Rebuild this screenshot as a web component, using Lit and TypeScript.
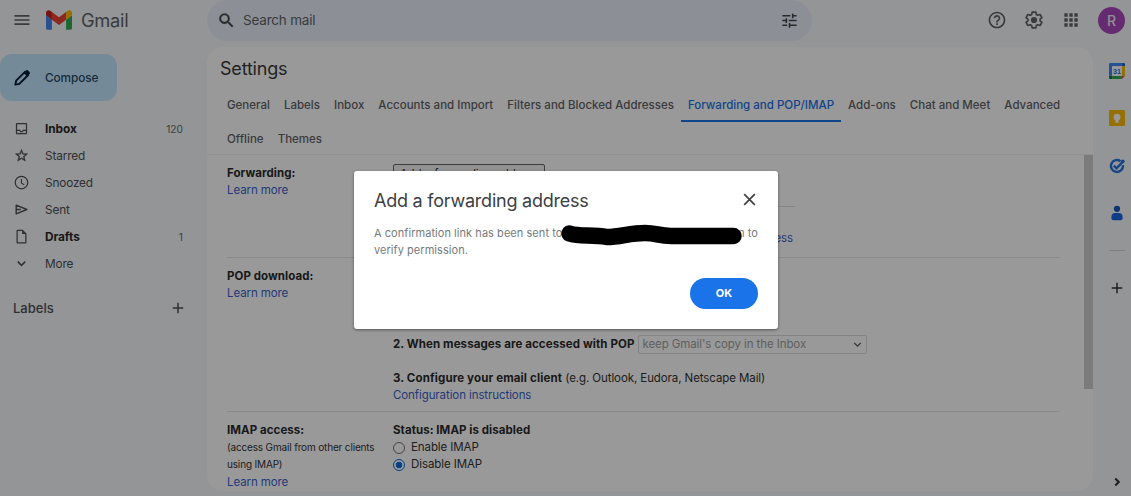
import { html, css, svg, LitElement } from "lit";
import { customElement, property, state } from "lit/decorators.js";
import { classMap } from "lit/directives/class-map.js";

const icons = {
  menu: svg`<path d="M3 18h18v-2H3v2zm0-5h18v-2H3v2zm0-7v2h18V6H3z" />`,
  search: svg`<path d="M15.500 14h-.79l-.28-.27A6.470 6.470 0 0 0 16 9.500 6.500 6.500 0 1 0 9.500 16c1.610 0 3.090-.59 4.230-1.570l.27.28v.79l5 4.990L20.490 19l-4.990-5zm-6 0C7.010 14 5 11.990 5 9.500S7.010 5 9.500 5 14 7.010 14 9.500 11.990 14 9.500 14z" stroke="currentColor" stroke-width=".5" />`,
  tune: svg`<path d="M3 17v2h6v-2H3zM3 5v2h10V5H3zm10 16v-2h8v-2h-8v-2h-2v6h2zM7 9v2H3v2h4v2h2V9H7zm14 4v-2H11v2h10zm-6-4h2V7h4V5h-4V3h-2v6z" />`,
  help: svg`<path d="M11 18h2v-2h-2v2zm1-16C6.480 2 2 6.480 2 12s4.480 10 10 10 10-4.480 10-10S17.520 2 12 2zm0 18c-4.410 0-8-3.590-8-8s3.590-8 8-8 8 3.590 8 8-3.590 8-8 8zm0-14c-2.210 0-4 1.790-4 4h2c0-1.100.9-2 2-2s2 .9 2 2c0 2-3 1.750-3 5h2c0-2.250 3-2.500 3-5 0-2.210-1.790-4-4-4z" />`,
  gear: svg`<path d="M9.800 2.500h4.400l.6 2.900 1.700 1 2.900-1 2.100 3.700-2.200 1.950v1.900l2.200 1.950-2.100 3.700-2.900-1-1.700 1-.6 2.900H9.800l-.6-2.900-1.700-1-2.900 1-2.100-3.700 2.200-1.950v-1.900L2.500 9.100l2.100-3.700 2.900 1 1.700-1z" fill="none" stroke="currentColor" stroke-width="2" stroke-linejoin="round" /><circle cx="12" cy="12" r="3.700" />`,
  apps: svg`<path d="M4 4h4v4H4zM10 4h4v4h-4zM16 4h4v4h-4zM4 10h4v4H4zM10 10h4v4h-4zM16 10h4v4h-4zM4 16h4v4H4zM10 16h4v4h-4zM16 16h4v4h-4z" />`,
  pencil: svg`<path d="M4 20l1-4.800L15.600 4.600l3.800 3.800L8.800 19z" fill="none" stroke="currentColor" stroke-width="2.300" stroke-linejoin="round" /><path d="M14 6l3-3.200q1-.9 2 0l2.200 2.200q.9 1 0 2L18 10z" />`,
  inbox: svg`<path d="M19 3H5c-1.100 0-2 .9-2 2v14c0 1.100.9 2 2 2h14c1.100 0 2-.9 2-2V5c0-1.100-.9-2-2-2zm0 16H5v-3h3.560c.69 1.190 1.970 2 3.450 2s2.750-.81 3.450-2H19v3zm0-5h-4.990c0 1.100-.9 2-2 2s-2-.9-2-2H5V5h14v9z" />`,
  star: svg`<path d="M22 9.240l-7.190-.62L12 2 9.190 8.630 2 9.240l5.460 4.730L5.820 21 12 17.270 18.180 21l-1.630-7.030L22 9.240zM12 15.400l-3.760 2.270 1-4.280-3.320-2.880 4.380-.38L12 6.100l1.710 4.040 4.380.38-3.320 2.880 1 4.280L12 15.400z" stroke="currentColor" stroke-width=".6" />`,
  clock: svg`<circle cx="12" cy="12" r="10" fill="none" stroke="currentColor" stroke-width="2" /><path d="M11 6.500h1.800v5.700l4 2.900-1 1.400L11 13z" />`,
  sent: svg`<path d="M3.500 5l17 7-17 7zM4 12h7" fill="none" stroke="currentColor" stroke-width="2.200" stroke-linejoin="round" />`,
  draft: svg`<path d="M14 1H6c-1.100 0-2 .9-2 2v18c0 1.100.9 2 2 2h12c1.100 0 2-.9 2-2V7l-6-6zM6 21V3h7v5h5v13H6z" />`,
  down: svg`<path d="M6 9l6 6 6-6" fill="none" stroke="currentColor" stroke-width="2.300" />`,
  right: svg`<path d="M9 6l6 6-6 6" fill="none" stroke="currentColor" stroke-width="3.500" />`,
  plus: svg`<path d="M19 13h-6v6h-2v-6H5v-2h6V5h2v6h6v2z" />`,
  close: svg`<path d="M4.500 4.500l15 15M19.500 4.500l-15 15" fill="none" stroke="currentColor" stroke-width="2.500" />`,
};

@customElement("mail-icon")
export class MailIcon extends LitElement {
  static styles = css`
    :host {
      display: block;
      flex: none;
      width: 18px;
      height: 18px;
    }
    svg {
      display: block;
      width: 100%;
      height: 100%;
      fill: currentColor;
    }
  `;

  @property({ type: String }) name: keyof typeof icons = "menu";

  render() {
    return html`<svg viewBox="0 0 24 24">${icons[this.name]}</svg>`;
  }
}

@customElement("mail-header")
export class MailHeader extends LitElement {
  static styles = css`
    :host {
      display: grid;
      grid-template-columns: 207px 605px 1fr;
      height: 41px;
      color: #5f6368;
    }
    .brand,
    .search,
    .actions {
      display: flex;
      align-items: center;
      box-sizing: border-box;
      padding-bottom: 1px;
    }
    .brand {
      padding-left: 12px;
    }
    .brand mail-icon {
      width: 20px;
      height: 20px;
    }
    .logo {
      width: 26px;
      height: 20px;
      margin: 0 9px 0 14px;
    }
    .name {
      font-size: 18.3px;
      letter-spacing: -0.3px;
    }
    .search {
      padding-left: 10px;
      padding-right: 13px;
      border-radius: 21px;
      background: #eaf1fb;
      font-size: 13.5px;
    }
    .search span {
      flex: 1;
      margin-left: 7px;
      letter-spacing: -0.2px;
    }
    .search mail-icon {
      color: #444746;
      width: 19px;
      height: 19px;
    }
    .actions {
      justify-content: flex-end;
      padding-right: 6px;
      gap: 17px;
    }
    .actions mail-icon {
      width: 20px;
      height: 20px;
    }
    .avatar {
      width: 27px;
      height: 27px;
      border-radius: 50%;
      background: #ab47bc;
      color: #eee;
      font-size: 14px;
      font-weight: 500;
      line-height: 28px;
      text-align: center;
    }
  `;

  render() {
    return html`
      <div class="brand">
        <mail-icon name="menu"></mail-icon>
        <svg class="logo" viewBox="52 42 88 66">
          <path fill="#4285f4" d="M58 108h14V74L52 59v43c0 3.320 2.690 6 6 6" />
          <path fill="#34a853" d="M120 108h14c3.320 0 6-2.690 6-6V59l-20 15" />
          <path fill="#fbbc04" d="M120 48v26l20-15v-8c0-7.420-8.470-11.650-14.400-7.200" />
          <path fill="#ea4335" d="M72 74V48l24 18 24-18v26L96 92" />
          <path fill="#c5221f" d="M52 51v8l20 15V48l-5.600-4.200c-5.940-4.450-14.400-.22-14.400 7.200" />
        </svg>
        <span class="name">Gmail</span>
      </div>
      <div class="search">
        <mail-icon name="search"></mail-icon>
        <span>Search mail</span>
        <mail-icon name="tune"></mail-icon>
      </div>
      <div class="actions">
        <mail-icon name="help"></mail-icon>
        <mail-icon name="gear"></mail-icon>
        <mail-icon name="apps"></mail-icon>
        <div class="avatar">R</div>
      </div>
    `;
  }
}

@customElement("mail-sidebar")
export class MailSidebar extends LitElement {
  static styles = css`
    :host {
      display: block;
      padding-top: 7px;
      color: #4d5054;
      font-size: 11.8px;
    }
    .compose {
      display: flex;
      align-items: center;
      box-sizing: border-box;
      width: 117px;
      height: 47px;
      padding-left: 12px;
      border-radius: 12px;
      background: #c2e7ff;
      color: #001d35;
      font-weight: 500;
    }
    .compose mail-icon {
      width: 20px;
      height: 20px;
      margin-right: 13px;
    }
    .compose span {
      color: #264a62;
      letter-spacing: -0.1px;
    }
    .folders {
      padding-top: 14px;
    }
    .folder {
      display: flex;
      align-items: center;
      height: 27px;
      padding: 0 24px 0 14px;
    }
    .folder mail-icon {
      width: 15px;
      height: 15px;
      margin-right: 16px;
    }
    .folder span {
      flex: 1;
      letter-spacing: -0.15px;
    }
    .folder small {
      color: #666a6e;
      font-size: 10.2px;
    }
    .folder--unread span {
      color: #2b2b2b;
      font-weight: 700;
      letter-spacing: -0.05px;
    }
    .labels {
      display: flex;
      align-items: center;
      justify-content: space-between;
      height: 20px;
      margin-top: 21px;
      padding: 0 20px 0 13px;
      font-size: 13px;
      font-weight: 500;
    }
    .labels mail-icon {
      width: 18px;
      height: 18px;
    }
  `;

  folders = [
    { icon: "inbox", name: "Inbox", count: "120" },
    { icon: "star", name: "Starred" },
    { icon: "clock", name: "Snoozed" },
    { icon: "sent", name: "Sent" },
    { icon: "draft", name: "Drafts", count: "1" },
    { icon: "down", name: "More" },
  ];

  render() {
    return html`
      <div class="compose">
        <mail-icon name="pencil"></mail-icon><span>Compose</span>
      </div>
      <div class="folders">
        ${this.folders.map(
          (f) => html`
            <div class=${classMap({ folder: true, "folder--unread": !!f.count })}>
              <mail-icon name=${f.icon}></mail-icon>
              <span>${f.name}</span>
              <small>${f.count}</small>
            </div>
          `
        )}
      </div>
      <div class="labels">
        Labels
        <mail-icon name="plus"></mail-icon>
      </div>
    `;
  }
}

@customElement("mail-settings")
export class MailSettings extends LitElement {
  static styles = css`
    :host {
      display: block;
      box-sizing: border-box;
      height: 444px;
      overflow: hidden;
      border-radius: 16px;
      background: #fff;
      color: #333;
      font-size: 11.5px;
      line-height: 17px;
      letter-spacing: -0.09px;
    }
    h1 {
      margin: 0;
      padding: 10px 13px 0;
      color: #3a3a3a;
      font-size: 18px;
      font-weight: 400;
      line-height: 24px;
      letter-spacing: -0.2px;
    }
    b {
      color: #2b2b2b;
      letter-spacing: 0.06px;
    }
    .tabs {
      display: flex;
      flex-wrap: wrap;
      align-content: flex-start;
      box-sizing: border-box;
      height: 74px;
      padding: 8px 13px 0;
      border-bottom: 1px solid #f0f0f0;
    }
    .tab {
      box-sizing: border-box;
      height: 34px;
      padding: 8px 7px 0;
      color: #5f6368;
      font-weight: 500;
      letter-spacing: 0.01px;
      white-space: nowrap;
    }
    .tab--active {
      height: 33px;
      border-bottom: 2px solid #1a73e8;
      color: #1a73e8;
    }
    .body {
      display: flex;
      height: 336px;
    }
    .rows {
      width: 833px;
      margin: 0 24px 0 20px;
    }
    .row {
      display: grid;
      grid-template-columns: 166px 1fr;
      box-sizing: border-box;
      padding-top: 9px;
      border-bottom: 1px solid #e6e6e6;
      white-space: nowrap;
    }
    .row--forwarding {
      height: 103px;
    }
    .row--pop {
      height: 154px;
    }
    .row--imap {
      border: 0;
    }
    .label {
      padding-top: 0.6px;
    }
    .link {
      color: #3a5fc8;
    }
    .note {
      font-size: 10px;
      line-height: 17.7px;
      letter-spacing: -0.16px;
    }
    .add {
      box-sizing: border-box;
      width: 152px;
      height: 20px;
      border: 1px solid #666;
      border-radius: 2px;
      background: #f4f4f4;
      line-height: 19px;
      text-align: center;
    }
    .address {
      box-sizing: border-box;
      width: 402px;
      margin-top: 22px;
      padding: 23px 2px 0 0;
      border-top: 1px solid #ddd;
      text-align: right;
    }
    .modes {
      height: 69px;
    }
    .when {
      display: flex;
      align-items: center;
      gap: 4px;
      height: 17px;
      margin-bottom: 17px;
    }
    .when b {
      letter-spacing: 0.1px;
    }
    .client b {
      letter-spacing: 0.14px;
    }
    .select {
      display: flex;
      align-items: center;
      justify-content: space-between;
      box-sizing: border-box;
      width: 229px;
      height: 19px;
      padding: 0 2px 0 3px;
      border: 1px solid #dcdcdc;
      border-radius: 2px;
      color: #a0a0a0;
    }
    .select mail-icon {
      width: 13px;
      height: 13px;
      color: #555;
    }
    .option {
      display: flex;
      align-items: center;
      gap: 6px;
    }
    .radio {
      box-sizing: border-box;
      width: 12px;
      height: 12px;
      margin-top: 1px;
      border: 1px solid #767676;
      border-radius: 50%;
    }
    .radio--checked {
      border-color: #0b6be0;
      background: radial-gradient(circle, #0b6be0 3px, transparent 3.6px);
    }
    .scrollbar {
      width: 9px;
      height: 234px;
      background: #cecece;
    }
  `;

  @property({ type: String }) active = "Forwarding and POP/IMAP";
  @property({ type: String }) imap = "Disable";

  tabs = [
    "General",
    "Labels",
    "Inbox",
    "Accounts and Import",
    "Filters and Blocked Addresses",
    "Forwarding and POP/IMAP",
    "Add-ons",
    "Chat and Meet",
    "Advanced",
    "Offline",
    "Themes",
  ];

  render() {
    return html`
      <h1>Settings</h1>
      <div class="tabs">
        ${this.tabs.map(
          (tab) => html`
            <div class=${classMap({ tab: true, "tab--active": tab === this.active })}>${tab}</div>
          `
        )}
      </div>
      <div class="body">
        <div class="rows">
          <div class="row row--forwarding">
            <div class="label">
              <b>Forwarding:</b>
              <div class="link">Learn more</div>
            </div>
            <div>
              <div class="add">Add a forwarding address</div>
              <div class="address"><span class="link">Remove address</span></div>
            </div>
          </div>
          <div class="row row--pop">
            <div class="label">
              <b>POP download:</b>
              <div class="link">Learn more</div>
            </div>
            <div>
              <div class="modes"></div>
              <div class="when">
                <b>2. When messages are accessed with POP</b>
                <div class="select">
                  keep Gmail's copy in the Inbox
                  <mail-icon name="down"></mail-icon>
                </div>
              </div>
              <div class="client">
                <b>3. Configure your email client</b> (e.g. Outlook, Eudora, Netscape Mail)
              </div>
              <div class="link">Configuration instructions</div>
            </div>
          </div>
          <div class="row row--imap">
            <div class="label">
              <b>IMAP access:</b>
              <div class="note">(access Gmail from other clients<br />using IMAP)</div>
              <div class="link">Learn more</div>
            </div>
            <div class="label">
              <b>Status: IMAP is disabled</b>
              ${["Enable", "Disable"].map(
                (mode) => html`
                  <div class="option">
                    <span
                      class=${classMap({ radio: true, "radio--checked": mode === this.imap })}
                    ></span>
                    ${mode} IMAP
                  </div>
                `
              )}
            </div>
          </div>
        </div>
        <div class="scrollbar"></div>
      </div>
    `;
  }
}

@customElement("mail-rail")
export class MailRail extends LitElement {
  static styles = css`
    :host {
      display: flex;
      flex-direction: column;
      align-items: center;
      box-sizing: border-box;
      height: 449px;
      padding: 16px 0 5px 10px;
      color: #333;
    }
    .app {
      width: 16px;
      height: 16px;
      margin-bottom: 31.3px;
    }
    .day {
      font: 700 9px "Liberation Sans", sans-serif;
      fill: #1a73e8;
    }
    hr {
      width: 16px;
      height: 1px;
      margin: -2px 0 28px;
      border: 0;
      background: #d4d4d4;
    }
    .collapse {
      width: 14px;
      height: 14px;
      margin-top: auto;
      margin-bottom: 2px;
    }
  `;

  render() {
    return html`
      <svg class="app" viewBox="0 0 20 20">
        <path fill="#4285f4" d="M1.500 0H16v4H4v12H0V1.500Q0 0 1.500 0z" />
        <path fill="#1967d2" d="M16 0h2.500Q20 0 20 1.500V4h-4z" />
        <path fill="#fbbc04" d="M16 4h4v12h-4z" />
        <path fill="#34a853" d="M4 16h12v4H4z" />
        <path fill="#188038" d="M0 16h4v4H1.500Q0 20 0 18.500z" />
        <path fill="#ea4335" d="M16 16h4l-4 4z" />
        <path fill="#fff" d="M4 4h12v12H4z" />
        <text class="day" x="5" y="13.200">31</text>
      </svg>
      <svg class="app" viewBox="0 0 20 20">
        <rect width="20" height="20" rx="1.500" fill="#fbbc04" />
        <circle cx="10" cy="9" r="4.300" fill="#fff" />
        <path fill="#fff" d="M8 12h4v4H8z" />
      </svg>
      <svg class="app" viewBox="0 0 20 20">
        <path d="M14.500 4A7.500 7.500 0 1 0 17.400 9" fill="none" stroke="#2573e0" stroke-width="3" />
        <path d="M6 9.500l3.300 3.400 8.500-8.700" fill="none" stroke="#2573e0" stroke-width="3" />
        <circle cx="17.300" cy="4" r="2.200" fill="#2573e0" />
      </svg>
      <svg class="app" viewBox="0 0 20 20">
        <circle cx="10" cy="4.800" r="3.900" fill="#1557c0" />
        <path fill="#1967e2" d="M3 15q0-5 5-5h4q5 0 5 5v1.500q0 2.500-2.500 2.500h-9Q3 19 3 16.500z" />
      </svg>
      <hr />
      <mail-icon name="plus"></mail-icon>
      <mail-icon class="collapse" name="right"></mail-icon>
    `;
  }
}

@customElement("mail-dialog")
export class MailDialog extends LitElement {
  static styles = css`
    :host {
      display: flex;
      flex-direction: column;
      box-sizing: border-box;
      width: 424px;
      height: 158px;
      padding: 15px 20px 20px;
      border-radius: 3px;
      background: #fff;
      box-shadow: 0 1px 3px rgba(0, 0, 0, 0.45);
      color: #757a80;
      font-size: 11px;
      line-height: 17px;
    }
    header {
      display: flex;
      align-items: center;
      justify-content: space-between;
      height: 28px;
      color: #3c4043;
      font-size: 18px;
      letter-spacing: -0.23px;
    }
    header mail-icon {
      width: 17px;
      height: 17px;
      margin-top: -2px;
      color: #444;
    }
    .message {
      position: relative;
      margin-top: 11px;
      letter-spacing: 0.05px;
    }
    .line {
      display: flex;
      justify-content: space-between;
      width: 384px;
    }
    .marker {
      position: absolute;
      top: -9px;
      left: 182px;
      width: 190px;
      height: 36px;
      fill: none;
      stroke: #000;
      stroke-width: 16.5;
      stroke-linecap: round;
    }
    button {
      align-self: flex-end;
      width: 68px;
      height: 31px;
      margin-top: auto;
      padding-bottom: 2px;
      border: 0;
      border-radius: 16px;
      background: #1a73e8;
      color: #fff;
      font: 700 11px Inter, sans-serif;
    }
  `;

  handleClose() {
    this.dispatchEvent(new CustomEvent("close", { bubbles: true, composed: true }));
  }

  render() {
    return html`
      <header>
        Add a forwarding address
        <mail-icon name="close" @click=${this.handleClose}></mail-icon>
      </header>
      <div class="message">
        <div class="line"><span>A confirmation link has been sent to</span><span>m to</span></div>
        <div>verify permission.</div>
        <svg class="marker" viewBox="556 216 190 36">
          <path d="M569.500 233.500C580 237 592 234 607 237C620 237 630 233 645 233C656 233 659 236 671 236H718L733.500 236" />
        </svg>
      </div>
      <button @click=${this.handleClose}>OK</button>
    `;
  }
}

@customElement("app-root")
export class AppRoot extends LitElement {
  static styles = css`
    :host {
      display: block;
      position: relative;
      width: 1131px;
      height: 496px;
      overflow: hidden;
      background: #f6f8fc;
      font-family: Inter, "Open Sans", sans-serif;
    }
    .main {
      display: grid;
      grid-template-columns: 207px 886px 38px;
      padding-top: 6px;
    }
    .scrim {
      position: absolute;
      inset: 0;
      display: flex;
      align-items: flex-start;
      padding: 171px 0 0 354px;
      background: rgba(0, 0, 0, 0.4);
    }
  `;

  @state() open = true;

  render() {
    return html`
      <mail-header></mail-header>
      <div class="main">
        <mail-sidebar></mail-sidebar>
        <mail-settings></mail-settings>
        <mail-rail></mail-rail>
      </div>
      ${this.open
        ? html`<div class="scrim">
            <mail-dialog @close=${() => (this.open = false)}></mail-dialog>
          </div>`
        : html``}
    `;
  }
}
